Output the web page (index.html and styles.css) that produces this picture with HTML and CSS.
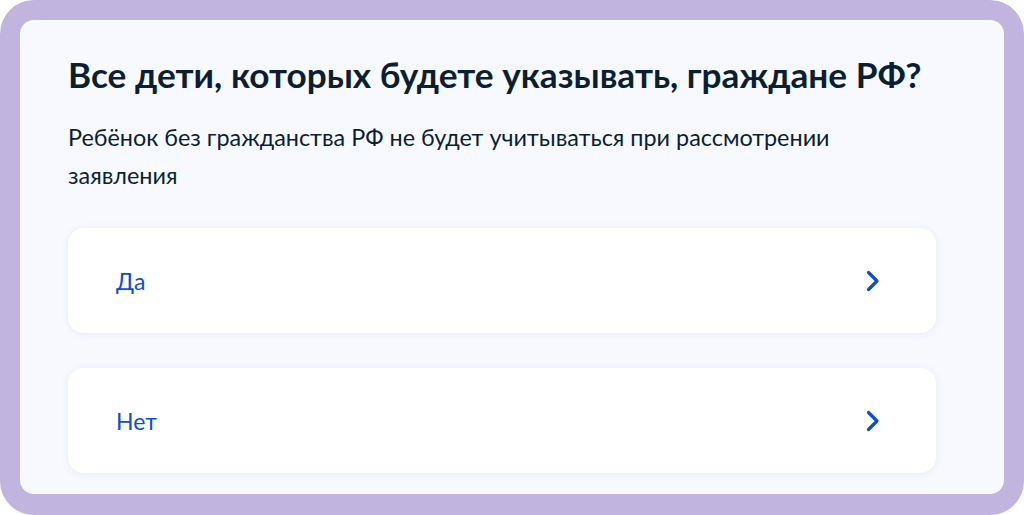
FILE: index.html
```html
<!DOCTYPE html>
<html lang="ru">
<head>
<meta charset="utf-8">
<link rel="stylesheet" href="styles.css">
</head>
<body>
<div class="frame">
  <div class="panel">
    <h1 class="title">Все дети, которых будете указывать, граждане РФ?</h1>
    <p class="subtitle">Ребёнок без гражданства РФ не будет учитываться при рассмотрении заявления</p>
    <div class="options">
      <div class="option">
        <span class="option-label">Да</span>
        <svg class="chevron" width="14" height="24" viewBox="0 0 14 24"><path d="M2.5 3.5 L11 12 L2.5 20.5" fill="none" stroke="#0d4cd3" stroke-width="3.2" stroke-linecap="round" stroke-linejoin="round"/></svg>
      </div>
      <div class="option">
        <span class="option-label">Нет</span>
        <svg class="chevron" width="14" height="24" viewBox="0 0 14 24"><path d="M2.5 3.5 L11 12 L2.5 20.5" fill="none" stroke="#0d4cd3" stroke-width="3.2" stroke-linecap="round" stroke-linejoin="round"/></svg>
      </div>
    </div>
  </div>
</div>
</body>
</html>
```
FILE: styles.css
```css
* { box-sizing: border-box; }
html, body { margin: 0; padding: 0; background: #ffffff; }
body { font-family: Lato, "Noto Sans", sans-serif; }
.frame {
  width: 1024px;
  height: 515px;
  background: #c1b4df;
  border-radius: 34px;
  padding: 20px 20px 21px 20px;
}
.panel {
  height: 100%;
  background: #f7f9fe;
  border-radius: 14px;
  padding: 33px 68px 0 48px;
  overflow: hidden;
}
.title {
  margin: 0;
  font-size: 35.2px;
  line-height: 42px;
  font-weight: 700;
  color: #0b1f33;
  white-space: nowrap;
}
.subtitle {
  margin: 23px 0 0 0;
  max-width: 820px;
  font-size: 23.4px;
  line-height: 38px;
  color: #0b1f33;
}
.options {
  margin-top: 34px;
  display: flex;
  flex-direction: column;
  gap: 35px;
}
.option {
  height: 105px;
  background: #ffffff;
  border-radius: 16px;
  box-shadow: 0 1px 8px rgba(30, 60, 140, 0.07);
  display: flex;
  align-items: center;
  justify-content: space-between;
  padding: 0 56px 0 48px;
}
.option-label {
  font-size: 23px;
  color: #0d4cd3;
}
.chevron { display: block; }
```
